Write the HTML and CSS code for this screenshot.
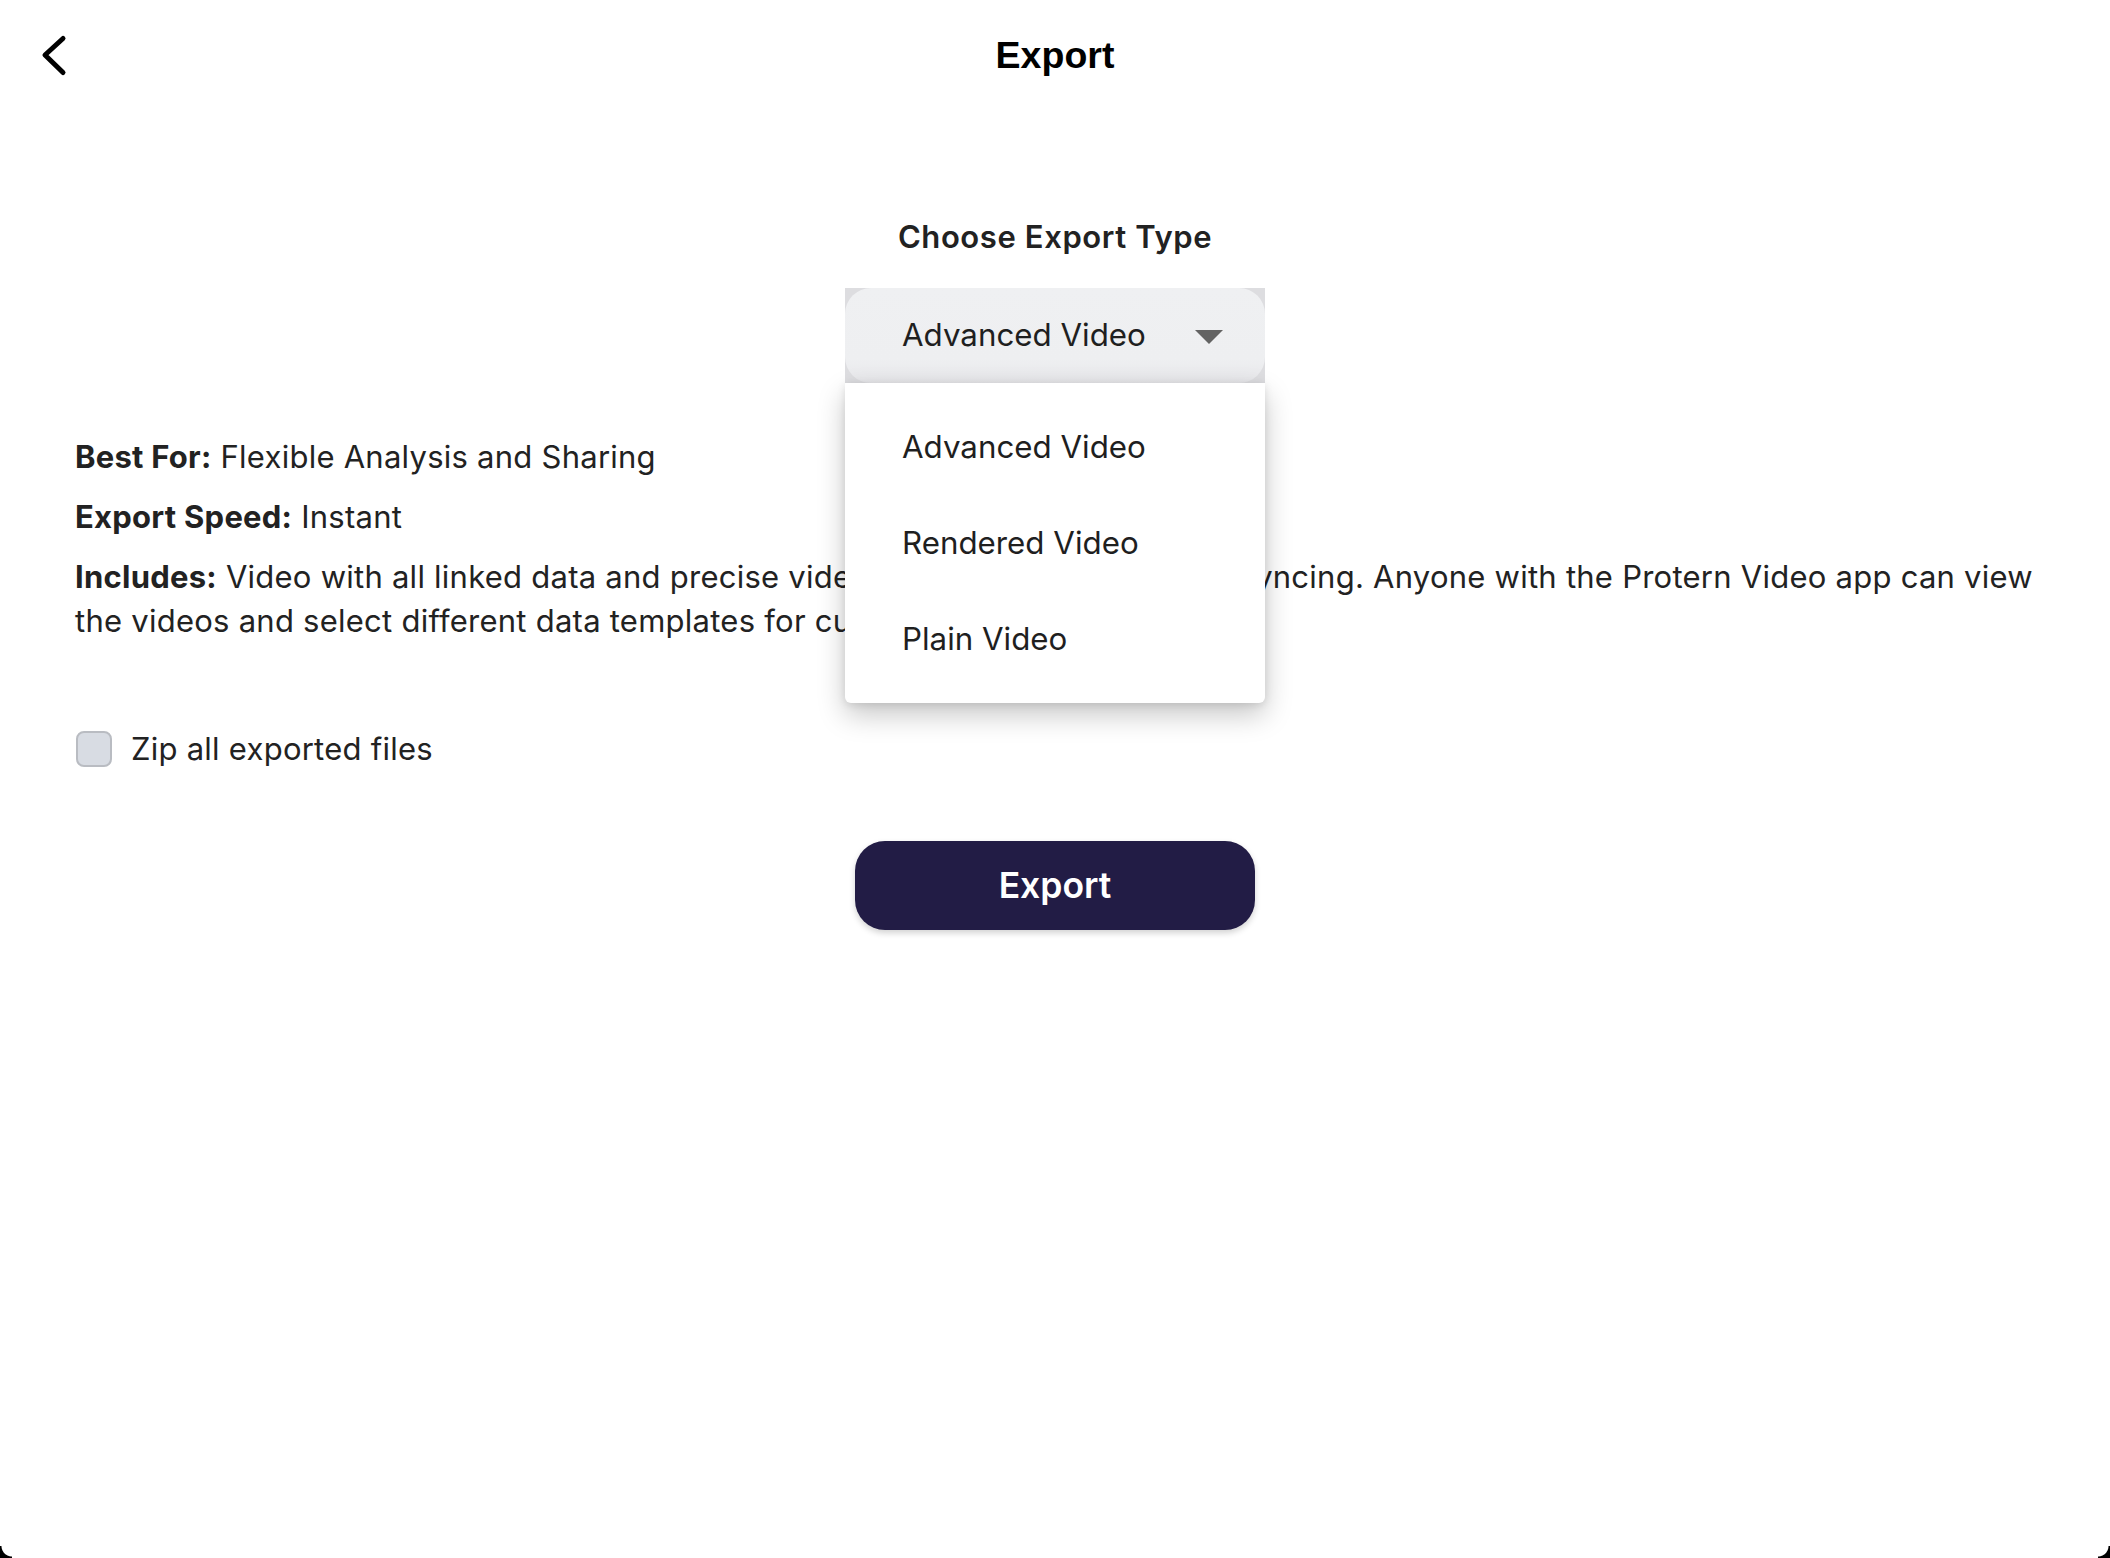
FILE: index.html
```html
<!DOCTYPE html>
<html lang="en">
<head>
<meta charset="utf-8">
<title>Export</title>
<link rel="stylesheet" href="styles.css">
</head>
<body>
<div class="screen">
  <header class="topbar">
    <div class="topbar-left">
      <button class="back" aria-label="Back">
        <svg width="32" height="48" viewBox="0 0 32 48"><path d="M25 7.5 L7 24 L25 41.5" fill="none" stroke="#000" stroke-width="5" stroke-linecap="round" stroke-linejoin="round"/></svg>
      </button>
    </div>
    <h1 class="title">Export</h1>
    <div class="topbar-right"></div>
  </header>

  <main class="content">
    <h2 class="section-title">Choose Export Type</h2>

    <div class="select-wrap">
      <div class="select">
        <div class="select-inner">
          <span class="select-label">Advanced Video</span>
          <span class="caret"></span>
        </div>
      </div>
      <ul class="menu">
        <li class="menu-item">Advanced Video</li>
        <li class="menu-item">Rendered Video</li>
        <li class="menu-item">Plain Video</li>
      </ul>
    </div>

    <section class="info">
      <p class="info-line"><b>Best For:</b> Flexible Analysis and Sharing</p>
      <p class="info-line"><b>Export Speed:</b> Instant</p>
      <p class="info-line"><b>Includes:</b> Video with all linked data and precise video and sensor data stream syncing. Anyone with the Protern Video app can view the videos and select different data templates for custom analysis.</p>
    </section>

    <label class="check-row">
      <span class="checkbox"></span>
      <span class="check-label">Zip all exported files</span>
    </label>

    <div class="actions">
      <button class="export-btn">Export</button>
    </div>
  </main>
</div>
</body>
</html>
```

FILE: styles.css
```css
html, body {
  margin: 0;
  padding: 0;
  background: #ffffff;
}

body {
  font-family: Inter, "Noto Sans", sans-serif;
  color: #222222;
}

.screen {
  width: 2110px;
  height: 1558px;
  position: relative;
  overflow: hidden;
  background: #ffffff;
}

.screen::before,
.screen::after {
  content: "";
  position: absolute;
  bottom: 0;
  width: 12px;
  height: 12px;
}

.screen::before {
  left: 0;
  background: radial-gradient(circle at 100% 0%, transparent 10px, #000 11px);
}

.screen::after {
  right: 0;
  background: radial-gradient(circle at 0% 0%, transparent 10px, #000 11px);
}

/* Top bar */
.topbar {
  display: grid;
  grid-template-columns: 1fr auto 1fr;
  align-items: center;
  height: 109px;
}

.topbar-left {
  display: flex;
  align-items: center;
  padding-left: 38px;
}

.back {
  border: 0;
  background: transparent;
  padding: 0;
  margin: 0;
  width: 32px;
  height: 48px;
  display: block;
  cursor: pointer;
}

.back svg {
  display: block;
}

.title {
  margin: 0;
  font-family: "Liberation Sans", Arial, sans-serif;
  font-weight: 700;
  font-size: 37.5px;
  line-height: 44px;
  color: #000000;
}

/* Content */
.content {
  display: flex;
  flex-direction: column;
  align-items: center;
}

.section-title {
  margin: 110px 0 0;
  font-size: 31px;
  letter-spacing: 0.6px;
  line-height: 36px;
  font-weight: 600;
  color: #222222;
}

.select-wrap {
  position: relative;
  margin-top: 33px;
  width: 420px;
}

.select {
  height: 95px;
  background: #dddde0;
}

.select-inner {
  height: 100%;
  box-sizing: border-box;
  border-radius: 26px;
  background: linear-gradient(#eff0f2 0%, #eeeff1 75%, #e7e7ea 100%);
  display: flex;
  align-items: center;
  justify-content: space-between;
  padding: 0 42px 0 57px;
}

.select-label {
  font-size: 31.3px;
  line-height: 39px;
  color: #1f1f1f;
}

.caret {
  width: 0;
  height: 0;
  border-left: 14px solid transparent;
  border-right: 14px solid transparent;
  border-top: 14px solid #636363;
  margin-top: 2px;
}

.menu {
  position: absolute;
  top: 100%;
  left: 0;
  width: 420px;
  margin: 0;
  padding: 16px 0;
  list-style: none;
  background: #ffffff;
  box-shadow: 0 12px 28px rgba(0, 0, 0, 0.22), 0 2px 8px rgba(0, 0, 0, 0.10);
  border-radius: 0 0 6px 6px;
  z-index: 5;
}

.menu-item {
  height: 96px;
  display: flex;
  align-items: center;
  padding-left: 57px;
  font-size: 31.3px;
  line-height: 39px;
  color: #1f1f1f;
}

/* Info */
.info {
  align-self: stretch;
  padding: 0 74px 0 75px;
  margin-top: 52px;
}

.info-line {
  margin: 0 0 16px;
  font-size: 31px;
  letter-spacing: 0.25px;
  line-height: 44px;
  color: #222222;
}

.info-line:last-child {
  margin-bottom: 0;
}

.info-line b {
  font-weight: 700;
}

/* Checkbox */
.check-row {
  align-self: stretch;
  display: flex;
  align-items: center;
  gap: 19px;
  padding-left: 76px;
  margin-top: 84px;
}

.checkbox {
  width: 36px;
  height: 36px;
  box-sizing: border-box;
  border: 2px solid #b9bcc2;
  border-radius: 8px;
  background: #d8dce3;
}

.check-label {
  font-size: 31px;
  letter-spacing: 0.25px;
  line-height: 44px;
  color: #222222;
}

/* Export button */
.actions {
  margin-top: 70px;
}

.export-btn {
  width: 400px;
  height: 89px;
  border: 0;
  border-radius: 30px;
  background: #221c45;
  color: #ffffff;
  font-family: Inter, "Noto Sans", sans-serif;
  font-size: 35.5px;
  font-weight: 600;
  box-shadow: 0 3px 6px rgba(0, 0, 0, 0.18);
  cursor: pointer;
}
```
